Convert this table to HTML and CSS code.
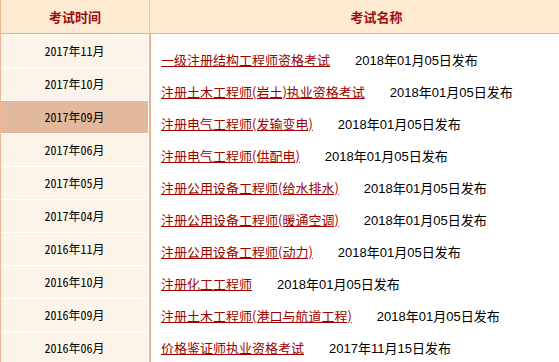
FILE: index.html
```html
<!DOCTYPE html>
<html lang="zh-CN">
<head>
<meta charset="utf-8">
<title>考试时间</title>
<link rel="stylesheet" href="styles.css">
</head>
<body>
<div class="table">
  <div class="head">
    <div class="h-time">考试时间</div>
    <div class="h-name">考试名称</div>
  </div>
  <div class="body">
    <ul class="months">
      <li class="first">2017年11月</li>
      <li>2017年10月</li>
      <li class="active">2017年09月</li>
      <li>2017年06月</li>
      <li>2017年05月</li>
      <li>2017年04月</li>
      <li>2016年11月</li>
      <li>2016年10月</li>
      <li>2016年09月</li>
      <li>2016年06月</li>
    </ul>
    <ul class="exams">
      <li><a href="#">一级注册结构工程师资格考试</a><span class="date">2018年01月05日发布</span></li>
      <li><a href="#">注册土木工程师(岩土)执业资格考试</a><span class="date">2018年01月05日发布</span></li>
      <li><a href="#">注册电气工程师(发输变电)</a><span class="date">2018年01月05日发布</span></li>
      <li><a href="#">注册电气工程师(供配电)</a><span class="date">2018年01月05日发布</span></li>
      <li><a href="#">注册公用设备工程师(给水排水)</a><span class="date">2018年01月05日发布</span></li>
      <li><a href="#">注册公用设备工程师(暖通空调)</a><span class="date">2018年01月05日发布</span></li>
      <li><a href="#">注册公用设备工程师(动力)</a><span class="date">2018年01月05日发布</span></li>
      <li><a href="#">注册化工工程师</a><span class="date">2018年01月05日发布</span></li>
      <li><a href="#">注册土木工程师(港口与航道工程)</a><span class="date">2018年01月05日发布</span></li>
      <li><a href="#">价格鉴证师执业资格考试</a><span class="date">2017年11月15日发布</span></li>
    </ul>
  </div>
</div>
</body>
</html>
```

FILE: styles.css
```css
html, body {
  margin: 0;
  padding: 0;
  background: #ffffff;
  overflow: hidden;
}

body {
  font-family: "Noto Sans CJK SC", sans-serif;
  color: #000;
}

.table {
  width: 559px;
}

.head {
  display: flex;
  height: 33px;
  background: #fee9d1;
  border-bottom: 1px solid #ebb08b;
  border-left: 1px solid #f0b993;
}

.h-time,
.h-name {
  line-height: 33px;
  font-size: 13px;
  font-weight: bold;
  color: #9a0f0f;
  text-align: center;
}

.h-time {
  width: 148px;
  border-right: 1px solid #f3c6a2;
}

.h-name {
  flex: 1;
  padding-left: 44px;
}

.body {
  display: flex;
  align-items: flex-start;
}

.months {
  list-style: none;
  margin: 0;
  padding: 0 1px 0 0;
  width: 147px;
  border-left: 1px solid #f0b993;
  border-right: 2px solid #f0b48c;
  background: #fff;
}

.months li {
  height: 32px;
  line-height: 32px;
  border-bottom: 1px solid #ffffff;
  background: #fdf4e9;
  text-align: center;
  font-size: 12px;
  font-feature-settings: "hwid";
}

.months li.first {
  height: 33px;
  line-height: 33px;
}

.months li.active {
  background: #e3b99d;
}

.exams {
  list-style: none;
  margin: 0;
  padding: 10px 0 0 10px;
  flex: 1;
  min-width: 0;
}

.exams li {
  height: 32px;
  line-height: 32px;
  font-size: 13px;
  white-space: nowrap;
}

.exams a {
  color: #9e0000;
  text-decoration: underline;
  padding-right: 3px;
}

.date {
  margin-left: 22px;
  font-family: "Liberation Sans", "Noto Sans CJK SC", sans-serif;
  color: #000;
}
```
